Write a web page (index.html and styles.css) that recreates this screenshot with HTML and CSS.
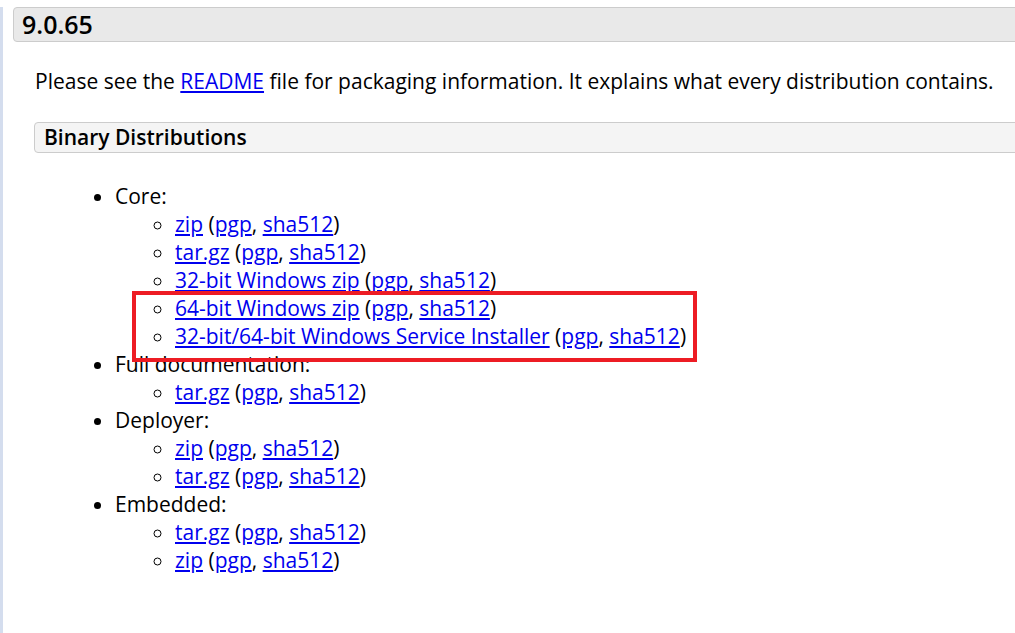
FILE: index.html
```html
<!DOCTYPE html>
<html>
<head>
<meta charset="utf-8">
<link rel="stylesheet" href="styles.css">
</head>
<body>
<div class="page">
  <h3 class="version">9.0.65</h3>
  <div class="section">
    <p class="intro">Please see the <a href="#">README</a> file for packaging information. It explains what every distribution contains.</p>
    <h4 class="sub">Binary Distributions</h4>
    <ul class="dist">
      <li>Core:
        <ul class="files core">
          <li><a href="#">zip</a> (<a href="#">pgp</a>, <a href="#">sha512</a>)</li>
          <li><a href="#">tar.gz</a> (<a href="#">pgp</a>, <a href="#">sha512</a>)</li>
          <li><a href="#">32-bit Windows zip</a> (<a href="#">pgp</a>, <a href="#">sha512</a>)</li>
          <li><a href="#">64-bit Windows zip</a> (<a href="#">pgp</a>, <a href="#">sha512</a>)</li>
          <li><a href="#">32-bit/64-bit Windows Service Installer</a> (<a href="#">pgp</a>, <a href="#">sha512</a>)</li>
          <div class="highlight"></div>
        </ul>
      </li>
      <li>Full documentation:
        <ul class="files">
          <li><a href="#">tar.gz</a> (<a href="#">pgp</a>, <a href="#">sha512</a>)</li>
        </ul>
      </li>
      <li>Deployer:
        <ul class="files">
          <li><a href="#">zip</a> (<a href="#">pgp</a>, <a href="#">sha512</a>)</li>
          <li><a href="#">tar.gz</a> (<a href="#">pgp</a>, <a href="#">sha512</a>)</li>
        </ul>
      </li>
      <li>Embedded:
        <ul class="files">
          <li><a href="#">tar.gz</a> (<a href="#">pgp</a>, <a href="#">sha512</a>)</li>
          <li><a href="#">zip</a> (<a href="#">pgp</a>, <a href="#">sha512</a>)</li>
        </ul>
      </li>
    </ul>
  </div>
</div>
</body>
</html>
```
FILE: styles.css
```css
html, body {
  margin: 0;
  padding: 0;
  background: #fff;
}
body {
  font-family: "Open Sans", "Noto Sans", sans-serif;
  font-size: 21px;
  color: #000;
  overflow: hidden;
}
.page {
  border-left: 3px solid #d4ddee;
  min-height: 633px;
  padding-left: 10px;
  box-sizing: border-box;
}
.version {
  margin: 7px -20px 0 0;
  height: 35px;
  box-sizing: border-box;
  border: 1px solid #cccccc;
  border-radius: 4px;
  background: #e9e9e9;
  font-size: 25px;
  font-weight: 600;
  line-height: 33px;
  padding: 0 0 0 8px;
}
.section {
  margin-left: 21px;
}
.intro {
  margin: 25px 0 0 1px;
  line-height: 28px;
}
.sub {
  margin: 27px -20px 0 0;
  height: 31px;
  box-sizing: border-box;
  border: 1px solid #cccccc;
  border-radius: 4px;
  background: #f4f4f4;
  font-size: 21px;
  font-weight: 600;
  line-height: 29px;
  padding: 0 0 0 9px;
}
.dist {
  margin: 29px 0 0 0;
  padding-left: 81px;
  line-height: 28px;
}
.files {
  padding-left: 60px;
  list-style-type: circle;
  position: relative;
}
a {
  color: #0000ee;
  text-decoration: underline;
}
.highlight {
  position: absolute;
  left: 17px;
  top: 81px;
  width: 565px;
  height: 71px;
  box-sizing: border-box;
  border: 4px solid #ed1c24;
}
```
